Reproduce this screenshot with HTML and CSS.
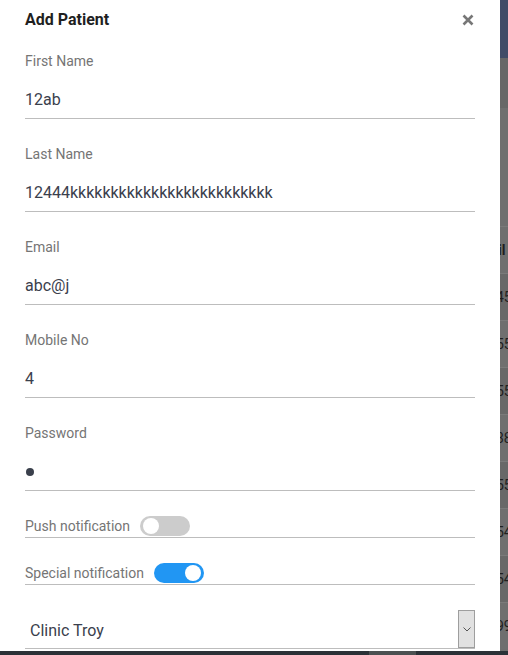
FILE: index.html
```html
<!DOCTYPE html>
<html>
<head>
<meta charset="utf-8">
<link rel="stylesheet" href="styles.css">
</head>
<body>
<div class="screen">
  <div class="panel">
    <div class="header">
      <span class="title">Add Patient</span>
      <svg class="close" width="12" height="12" viewBox="0 0 12 12"><path d="M1.5 1.5 L10.5 10.5 M10.5 1.5 L1.5 10.5" stroke="#777" stroke-width="2.6" stroke-linecap="butt"/></svg>
    </div>
    <div class="field">
      <div class="label">First Name</div>
      <div class="input">12ab</div>
    </div>
    <div class="field">
      <div class="label">Last Name</div>
      <div class="input">12444kkkkkkkkkkkkkkkkkkkkkkkkk</div>
    </div>
    <div class="field">
      <div class="label">Email</div>
      <div class="input">abc@j</div>
    </div>
    <div class="field">
      <div class="label">Mobile No</div>
      <div class="input">4</div>
    </div>
    <div class="field">
      <div class="label">Password</div>
      <div class="input"><span class="dot"></span></div>
    </div>
    <div class="toggle-row">
      <span class="label">Push notification</span>
      <span class="switch"><span class="knob"></span></span>
    </div>
    <div class="toggle-row">
      <span class="label">Special notification</span>
      <span class="switch on"><span class="knob"></span></span>
    </div>
    <div class="select">
      <span class="select-text">Clinic Troy</span>
      <span class="select-btn"><svg width="8" height="5" viewBox="0 0 8 5"><path d="M0.5 0.5 L4 4 L7.5 0.5" fill="none" stroke="#555" stroke-width="1"/></svg></span>
    </div>
  </div>
  <div class="backdrop">
    <div class="bd-top"></div>
    <div class="bd-band"></div>
    <div class="bd-gap"></div>
    <div class="bd-row"><span>il</span></div>
    <div class="bd-row alt"><span class="num">45</span></div>
    <div class="bd-row"><span class="num">55</span></div>
    <div class="bd-row alt"><span class="num">55</span></div>
    <div class="bd-row"><span class="num">38</span></div>
    <div class="bd-row alt"><span class="num">55</span></div>
    <div class="bd-row"><span class="num">54</span></div>
    <div class="bd-row alt"><span class="num">54</span></div>
    <div class="bd-row"><span class="num">99</span></div>
  </div>
</div>
<div class="taskbar"><span class="tb-seg"></span></div>
</body>
</html>
```

FILE: styles.css
```css
html, body {
  margin: 0;
  padding: 0;
}
body {
  width: 508px;
  height: 655px;
  overflow: hidden;
  font-family: Roboto, "Liberation Sans", sans-serif;
  background: #2b3036;
}
.screen {
  display: flex;
  height: 651px;
}
.panel {
  width: 500px;
  flex: none;
  background: #fff;
  padding: 0 25px 0 25px;
  box-sizing: border-box;
  overflow: hidden;
}
.header {
  display: flex;
  justify-content: space-between;
  align-items: center;
  height: 20px;
  padding-top: 10px;
  margin-bottom: 21px;
}
.title {
  font-weight: 700;
  font-size: 16px;
  line-height: 20px;
  color: #1f1f1f;
}
.close {
  margin-right: 1px;
}
.field {
  margin-bottom: 25px;
}
.label {
  font-size: 14px;
  line-height: 20px;
  color: #757575;
}
.input {
  font-size: 16px;
  line-height: 24px;
  height: 24px;
  padding: 17px 0 6px;
  color: #3a404c;
  border-bottom: 1px solid #bdbdbd;
  display: flex;
  align-items: center;
}
.dot {
  width: 8px;
  height: 8px;
  border-radius: 50%;
  background: #3a404c;
  margin-left: 1px;
}
.toggle-row {
  display: flex;
  align-items: flex-start;
  gap: 10px;
  height: 21px;
  border-bottom: 1px solid #bdbdbd;
  margin-bottom: 25px;
}
.switch {
  width: 50px;
  height: 20px;
  border-radius: 10px;
  background: #cccccc;
  position: relative;
  flex: none;
}
.switch .knob {
  position: absolute;
  left: 3px;
  top: 2px;
  width: 16px;
  height: 16px;
  border-radius: 50%;
  background: #fff;
}
.switch.on {
  background: #2196f3;
}
.switch.on .knob {
  left: 31px;
}
.select {
  display: flex;
  align-items: center;
  justify-content: space-between;
  height: 38px;
  border-bottom: 1px solid #bdbdbd;
}
.select-text {
  font-size: 16px;
  color: #3a404c;
  padding-left: 5px;
  padding-top: 2px;
}
.select-btn {
  width: 15px;
  height: 36px;
  background: #e1e1e1;
  border: 1px solid #9e9e9e;
  display: flex;
  align-items: center;
  justify-content: center;
  align-self: flex-start;
}
.backdrop {
  flex: 1;
  background: #6e6e6e;
  overflow: hidden;
  display: flex;
  flex-direction: column;
}
.bd-top {
  height: 58px;
  background: #414c67;
}
.bd-band {
  height: 50px;
  background: #676767;
}
.bd-gap {
  height: 118px;
  background: #6f6f6f;
}
.bd-row {
  height: 46px;
  border-top: 1px solid #7a7a7a;
  background: #6f6f6f;
  font-size: 14px;
  line-height: 46px;
  color: #1e1e1e;
  white-space: nowrap;
}
.bd-row.alt {
  background: #686868;
}
.bd-row span {
  display: inline-block;
  margin-left: -2px;
  font-weight: 700;
}
.bd-row .num {
  font-weight: 400;
  margin-left: -4px;
}
.taskbar {
  height: 4px;
  background: #2b3137;
  display: flex;
}
.tb-seg {
  margin-left: 369px;
  width: 47px;
  background: #4c5152;
}
```
